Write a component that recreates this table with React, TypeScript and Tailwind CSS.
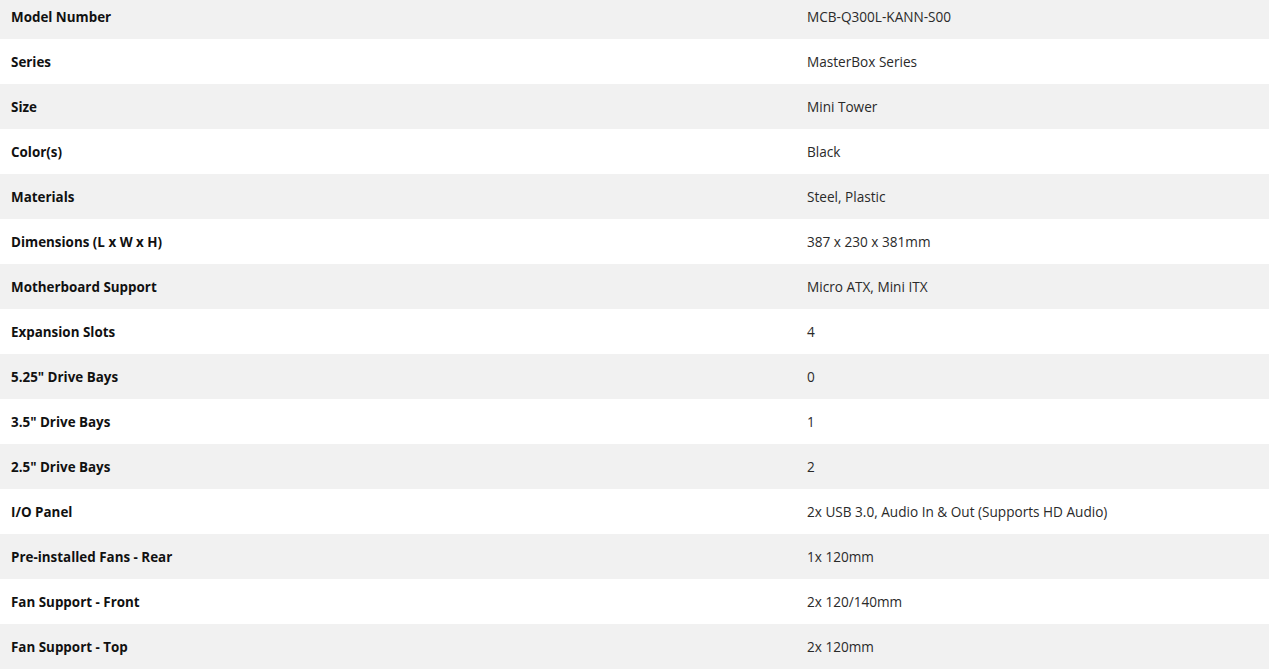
import React from "react";

const rows: [string, string][] = [
  ["Model Number", "MCB-Q300L-KANN-S00"],
  ["Series", "MasterBox Series"],
  ["Size", "Mini Tower"],
  ["Color(s)", "Black"],
  ["Materials", "Steel, Plastic"],
  ["Dimensions (L x W x H)", "387 x 230 x 381mm"],
  ["Motherboard Support", "Micro ATX, Mini ITX"],
  ["Expansion Slots", "4"],
  ["5.25\" Drive Bays", "0"],
  ["3.5\" Drive Bays", "1"],
  ["2.5\" Drive Bays", "2"],
  ["I/O Panel", "2x USB 3.0, Audio In & Out (Supports HD Audio)"],
  ["Pre-installed Fans - Rear", "1x 120mm"],
  ["Fan Support - Front", "2x 120/140mm"],
  ["Fan Support - Top", "2x 120mm"],
];

export default function App() {
  return (
    <div
      className="w-[1269px] h-[670px] overflow-hidden bg-white text-[13.6px] text-[#222]"
      style={{ fontFamily: '"Open Sans", "Noto Sans", sans-serif' }}
    >
      <div className="-mt-[6px] flex flex-col">
        {rows.map(([k, v], i) => (
          <div
            key={k}
            className={`flex h-[45px] items-center pt-[2px] ${i % 2 === 0 ? "bg-[#f1f1f1]" : "bg-white"}`}
          >
            <div className="w-[796px] pl-[11px] font-bold text-[13.4px] text-[#111]">{k}</div>
            <div className="flex-1 pl-[11px] text-[#2a2a2a]">{v}</div>
          </div>
        ))}
      </div>
    </div>
  );
}
